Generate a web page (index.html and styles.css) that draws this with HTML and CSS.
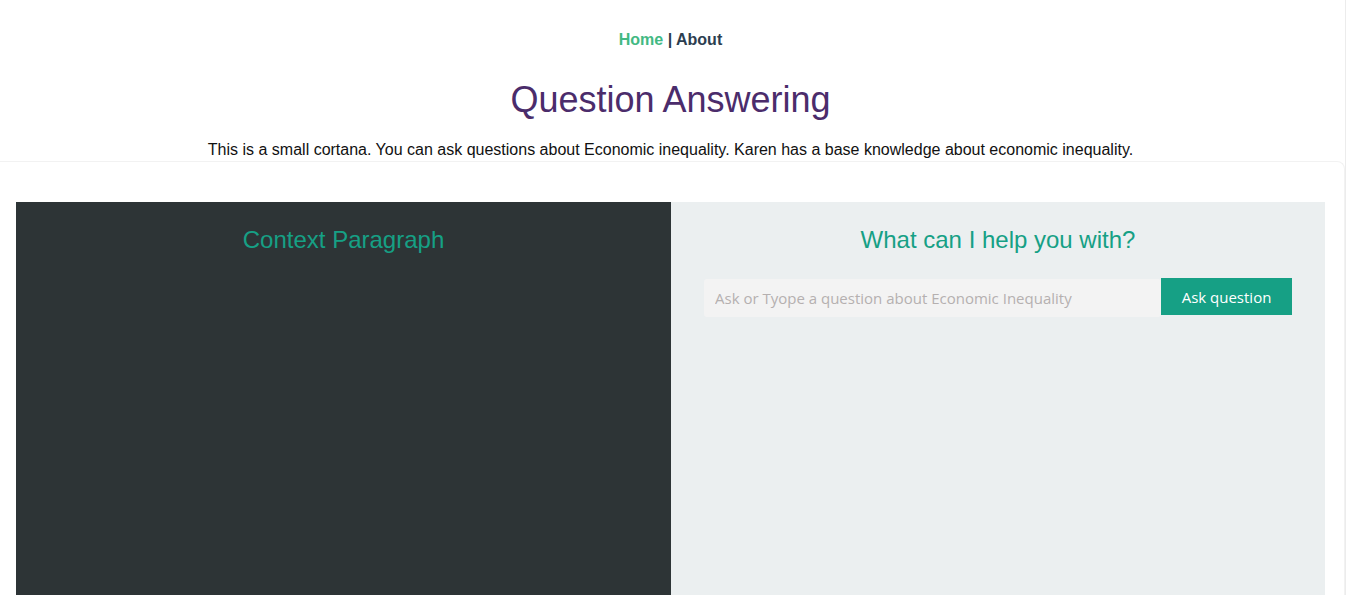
FILE: index.html
```html
<!DOCTYPE html>
<html lang="en">
<head>
<meta charset="utf-8">
<title>Question Answering</title>
<link rel="stylesheet" href="styles.css">
</head>
<body>
<div class="page">
  <nav class="nav">
    <a class="nav-link active" href="#">Home</a> | <a class="nav-link" href="#">About</a>
  </nav>
  <header class="hero">
    <h1 class="title">Question Answering</h1>
    <p class="lead">This is a small cortana. You can ask questions about Economic inequality. Karen has a base knowledge about economic inequality.</p>
  </header>
  <section class="card">
    <div class="panels">
      <div class="panel panel-dark">
        <h2 class="panel-title">Context Paragraph</h2>
      </div>
      <div class="panel panel-light">
        <h2 class="panel-title">What can I help you with?</h2>
        <form class="ask-form" onsubmit="return false">
          <input class="ask-input" type="text" placeholder="Ask or Tyope a question about Economic Inequality">
          <button class="ask-btn" type="submit">Ask question</button>
        </form>
      </div>
    </div>
  </section>
</div>
</body>
</html>
```

FILE: styles.css
```css
html, body {
  margin: 0;
  padding: 0;
  background: #fff;
  overflow: hidden;
}
body {
  font-family: "Liberation Sans", Arial, Helvetica, sans-serif;
  color: #2c3e50;
}
.page {
  width: 1345px;
  min-height: 595px;
  border-right: 1px solid #ececec;
  display: flex;
  flex-direction: column;
}
.nav {
  text-align: center;
  padding: 31px 4px 0 0;
  font-size: 16px;
  line-height: 18px;
  font-weight: bold;
  color: #2c3e50;
  height: 50px;
  box-sizing: border-box;
}
.nav-link {
  color: #2c3e50;
  text-decoration: none;
  font-weight: bold;
}
.nav-link.active {
  color: #42b983;
}
.hero {
  text-align: center;
  padding-right: 4px;
}
.title {
  margin: 29px 0 0;
  font-size: 36px;
  line-height: 41px;
  font-weight: normal;
  color: #4b2c6b;
}
.lead {
  margin: 21px 0 0;
  font-size: 16px;
  line-height: 18px;
  color: #111;
}
.card {
  margin-top: 2px;
  border-top: 1px solid #f2f2f2;
  border-right: 1px solid #f2f2f2;
  border-top-right-radius: 8px;
  padding: 40px 0 0 16px;
  flex: 1;
}
.panels {
  display: flex;
  width: 1309px;
  min-height: 400px;
}
.panel {
  padding-top: 24px;
  box-sizing: border-box;
}
.panel-dark {
  width: 655px;
  background: #2d3436;
}
.panel-light {
  width: 654px;
  background: #ebeff0;
  padding-left: 33px;
  padding-right: 33px;
}
.panel-title {
  margin: 0;
  text-align: center;
  font-size: 24px;
  line-height: 28px;
  font-weight: normal;
  color: #16a085;
}
.ask-form {
  display: flex;
  align-items: flex-start;
  margin-top: 24px;
}
.ask-input {
  flex: 1;
  height: 38px;
  margin-top: 1px;
  border: none;
  border-radius: 3px;
  background: #f3f3f3;
  padding: 0 11px;
  font-family: "Open Sans", "Noto Sans", sans-serif;
  font-size: 15px;
  color: #333;
  box-sizing: border-box;
  outline: none;
}
.ask-input::placeholder {
  color: #b5b0b0;
}
.ask-btn {
  width: 131px;
  height: 37px;
  border: none;
  background: #16a085;
  color: #fff;
  font-family: "Open Sans", "Noto Sans", sans-serif;
  font-size: 15px;
  padding: 0;
  cursor: pointer;
}
```
